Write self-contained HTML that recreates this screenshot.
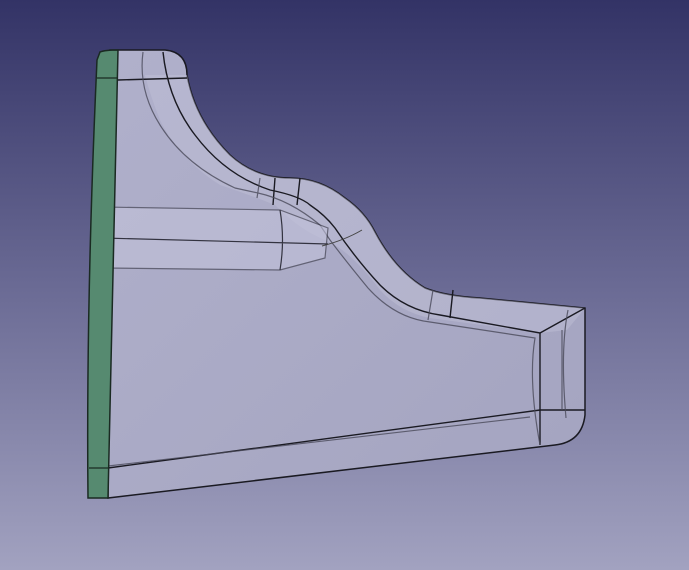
<!DOCTYPE html>
<html><head><style>html,body{margin:0;padding:0;width:689px;height:570px;overflow:hidden}</style></head>
<body>
<svg width="689" height="570" viewBox="0 0 689 570" xmlns="http://www.w3.org/2000/svg">
<defs>
<linearGradient id="bg" x1="0" y1="0" x2="0" y2="1">
<stop offset="0" stop-color="#333366"/>
<stop offset="0.5" stop-color="#6a6a94"/>
<stop offset="1" stop-color="#a2a2c0"/>
</linearGradient>
<linearGradient id="body" x1="0" y1="0" x2="1" y2="1">
<stop offset="0" stop-color="#b0b0cb"/>
<stop offset="1" stop-color="#a4a4c0"/>
</linearGradient>
</defs>
<rect width="689" height="570" fill="url(#bg)"/>
<path d="M110,50 L165,50 Q187,52 187,75 Q195,120 230,155 Q255,178 290,178 Q320,178 345,198 Q365,212 375,232 Q395,270 425,288 Q445,296 480,298 L585,308 L585,415 Q582,442 555,445 L108,498 Z" fill="url(#body)" stroke="#1a1a22" stroke-width="1.5"/>
<path d="M187,75 Q195,120 230,155 Q255,178 290,178 Q320,178 345,198 Q365,212 375,232 Q395,270 425,288 Q445,296 480,298 L585,308 L567,330 L540,333 L430,318 Q400,312 380,290 Q350,250 325,240 Q300,230 275,205 Q250,195 220,185 Q180,160 160,120 Q150,95 145,75 Z" fill="#c0c0d8" opacity="0.45"/>
<g fill="none" stroke="#1a1a22" stroke-width="1.4">
<path d="M118,80 L187,78"/>
<path d="M163,52 Q168,100 195,135 Q225,175 270,190 Q300,196 310,205 Q325,215 335,228 Q355,258 380,285 Q405,310 440,315 L540,333 L585,308"/>
<path d="M540,333 L540,445"/>
<path d="M540,410 L585,410"/>
<path d="M108,468 L540,410"/>
<path d="M275,178 L273,205 M300,178 L297,205 M453,290 L450,318"/>
</g>
<g fill="none" stroke="#4a4a5a" stroke-width="1.2" opacity="0.8">
<path d="M143,52 Q138,90 160,125 Q185,165 235,188 L258,193"/>
<path d="M258,193 Q290,200 320,225 L330,240 Q345,260 368,288 Q395,318 430,322 L535,338 Q528,380 540,445"/>
<path d="M260,178 L257,198 M433,290 L428,320"/>
<path d="M568,310 Q560,350 566,418 M562,330 L562,410"/>
<path d="M108,466 L530,417"/>
</g>
<path d="M103,207 L280,210 L328,228 L325,258 L280,270 L103,268 Z" fill="#c2c2da" opacity="0.6" stroke="#333340" stroke-width="1.2"/>
<path d="M103,238 L328,244 M280,210 Q285,240 280,270" fill="none" stroke="#333340" stroke-width="1.2"/>
<ellipse cx="105" cy="238" rx="3" ry="30" fill="none" stroke="#333340" stroke-width="1"/>
<path d="M322,246 Q345,240 362,230" fill="none" stroke="#444" stroke-width="1"/>
<path d="M100,52 Q105,50 118,50 L108,498 L88,498 Q86,300 97,60 Z" fill="#568a70" stroke="#1a2a22" stroke-width="1.5"/>
<path d="M97,78 L118,78 M89,468 L108,468" stroke="#1a2a22" stroke-width="1.2"/>
</svg>
</body></html>
